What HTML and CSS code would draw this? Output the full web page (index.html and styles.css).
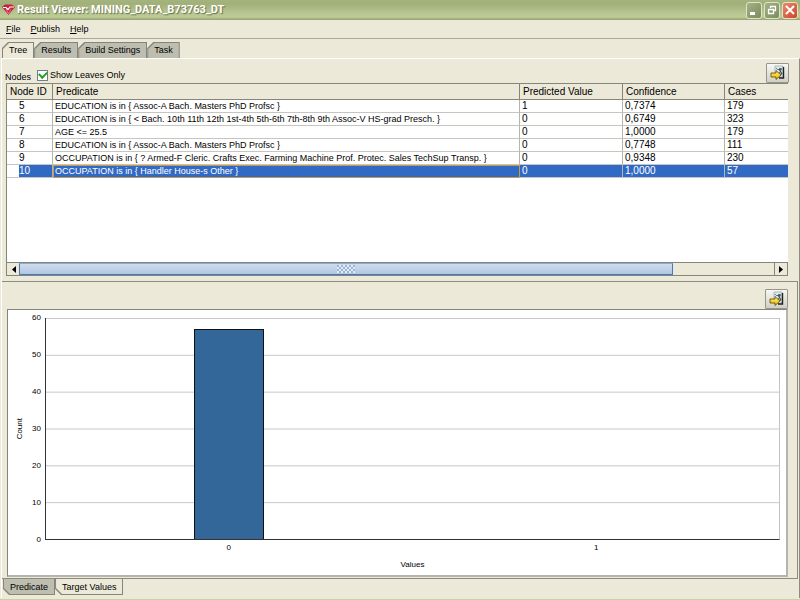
FILE: index.html
```html
<!doctype html>
<html lang="en">
  <head>
    <meta charset="utf-8">
    <meta name="viewport" content="width=device-width, initial-scale=1">
    <title>Result Viewer: MINING_DATA_B73763_DT</title>
    <link rel="stylesheet" href="styles.css">
  </head>
  <body>
    <!-- shared icon, used by both export buttons -->
    <svg class="defs" width="0" height="0" aria-hidden="true">
      <defs>
        <linearGradient id="gold" x1="0" y1="0" x2="0" y2="1">
          <stop offset="0" stop-color="#fff27a"/>
          <stop offset="1" stop-color="#f0b400"/>
        </linearGradient>
        <symbol id="export" viewBox="0 0 16 16">
          <path d="M5 1h8v11H5z" fill="#dfe9ee" stroke="#8a9298" stroke-width=".6"/>
          <path d="M13.500 2v11H9" fill="none" stroke="#222" stroke-width="1.400"/>
          <path d="M6 3l2 2 2-2 1 3-2 2 3 2" fill="none" stroke="#5d7f93"/>
          <path d="M9 4l3 5M11 3v2" stroke="#2c4b3c" stroke-width="1.200"/>
          <path d="M1 8h5V5.500L11 10l-5 4.500V12H1z" fill="url(#gold)" stroke="#6b5200" stroke-width=".9"/>
        </symbol>
      </defs>
    </svg>

    <div class="window">
      <header class="titlebar">
        <svg class="logo" width="13" height="12" viewBox="0 0 13 12" aria-hidden="true">
          <path d="M0 3l3-2.500h7L13 3 6.500 11z" fill="#c8203c"/>
          <path d="M1 3.500h3l2 2 2-2.500h4" fill="none" stroke="#fff" stroke-width="1.200"/>
          <path d="M4 5l2.500 5L9 5" fill="none" stroke="#f0899a" stroke-width=".8"/>
        </svg>
        <h1>Result Viewer: MINING_DATA_B73763_DT</h1>
        <div class="controls">
          <button type="button" class="control" aria-label="Minimize">
            <svg width="14" height="14" viewBox="0 0 14 14"><path d="M3 10.500h5" stroke="#fff" stroke-width="3"/></svg>
          </button>
          <button type="button" class="control" aria-label="Restore">
            <svg width="14" height="14" viewBox="0 0 14 14"><path d="M5.500 5V3.500h5v4H9M3.500 6.500h5v4h-5z" fill="none" stroke="#fff" stroke-width="1.300"/></svg>
          </button>
          <button type="button" class="control close" aria-label="Close">
            <svg width="14" height="14" viewBox="0 0 14 14"><path d="M3 3l8 8M11 3l-8 8" stroke="#fff" stroke-width="2"/></svg>
          </button>
        </div>
      </header>

      <nav class="menubar">
        <button type="button"><u>F</u>ile</button>
        <button type="button"><u>P</u>ublish</button>
        <button type="button"><u>H</u>elp</button>
      </nav>

      <div class="tabs">
        <button type="button" class="tab active"><span>Tree</span></button>
        <button type="button" class="tab"><span>Results</span></button>
        <button type="button" class="tab"><span>Build Settings</span></button>
        <button type="button" class="tab"><span>Task</span></button>
      </div>

      <main class="content">
        <section class="nodes">
          <div class="toolbar">
            <span class="caption">Nodes</span>
            <label class="leaves"><input type="checkbox" checked>Show Leaves Only</label>
            <button type="button" class="export" aria-label="Export nodes"><svg width="16" height="16"><use href="#export"/></svg></button>
          </div>
          <div class="table-box">
            <table>
              <colgroup>
                <col class="col-id"><col><col class="col-value"><col class="col-confidence"><col class="col-cases">
              </colgroup>
              <thead>
                <tr><th>Node ID</th><th>Predicate</th><th>Predicted Value</th><th>Confidence</th><th>Cases</th></tr>
              </thead>
              <tbody>
                <tr><td><span>5</span></td><td>EDUCATION is in { Assoc-A Bach. Masters PhD Profsc }</td><td>1</td><td>0,7374</td><td>179</td></tr>
                <tr><td><span>6</span></td><td>EDUCATION is in { &lt; Bach. 10th 11th 12th 1st-4th 5th-6th 7th-8th 9th Assoc-V HS-grad Presch. }</td><td>0</td><td>0,6749</td><td>323</td></tr>
                <tr><td><span>7</span></td><td>AGE &lt;= 25.5</td><td>0</td><td>1,0000</td><td>179</td></tr>
                <tr><td><span>8</span></td><td>EDUCATION is in { Assoc-A Bach. Masters PhD Profsc }</td><td>0</td><td>0,7748</td><td>111</td></tr>
                <tr><td><span>9</span></td><td>OCCUPATION is in { ? Armed-F Cleric. Crafts Exec. Farming Machine Prof. Protec. Sales TechSup Transp. }</td><td>0</td><td>0,9348</td><td>230</td></tr>
                <tr class="selected"><td><span>10</span></td><td>OCCUPATION is in { Handler House-s Other }</td><td>0</td><td>1,0000</td><td>57</td></tr>
              </tbody>
            </table>
            <div class="scrollbar">
              <button type="button" class="arrow" aria-label="Scroll left"><svg width="5" height="7" viewBox="0 0 5 7"><path d="M5 0v7L1 3.500z"/></svg></button>
              <div class="track"><div class="thumb"><i class="grip"></i></div></div>
              <button type="button" class="arrow" aria-label="Scroll right"><svg width="5" height="7" viewBox="0 0 5 7"><path d="M0 0v7l4-3.500z"/></svg></button>
            </div>
          </div>
        </section>

        <section class="details">
          <div class="pane">
            <div class="toolbar">
              <button type="button" class="export" aria-label="Export chart"><svg width="16" height="16"><use href="#export"/></svg></button>
            </div>
            <div class="chart">
              <div class="y-title"><span>Count</span></div>
              <ol class="y-axis">
                <li>60</li><li>50</li><li>40</li><li>30</li><li>20</li><li>10</li><li>0</li>
              </ol>
              <div class="plot">
                <div class="slot"><div class="bar" style="height: 95%"></div></div>
                <div class="slot"></div>
              </div>
              <div class="x-axis"><span>0</span><span>1</span></div>
              <div class="x-title">Values</div>
            </div>
          </div>
          <div class="tabs bottom">
            <button type="button" class="tab"><span>Predicate</span></button>
            <button type="button" class="tab active"><span>Target Values</span></button>
          </div>
        </section>
      </main>
    </div>
  </body>
</html>
```
FILE: styles.css
```css
* {
  box-sizing: border-box;
}
body {
  margin: 0;
  background: #ece9d8;
  color: #000;
  font: 9px/12px "Liberation Sans", Arial, sans-serif;
}
button {
  margin: 0;
  padding: 0;
  border: 0;
  background: none;
  color: inherit;
  font: inherit;
}
.defs {
  position: absolute;
}
.window {
  display: flex;
  flex-direction: column;
  min-height: 100vh;
  padding-bottom: 1px;
  border-bottom: 1px solid #c9d0a4;
}

/* title bar */
.titlebar {
  display: flex;
  align-items: center;
  height: 20px;
  padding: 0 2px;
  background: linear-gradient(#a5b37e, #a1b079 20%, #b5c48f 60%, #bccb98 85%, #93a16c);
}
.titlebar h1 {
  flex: 1;
  margin: 0 0 0 2px;
  color: #fff;
  font: bold 11px/18px Roboto, "Open Sans", sans-serif;
  text-shadow: 1px 1px 1px #66724a;
}
.controls {
  display: flex;
  gap: 2px;
}
.control {
  display: flex;
  width: 16px;
  height: 17px;
  align-items: center;
  justify-content: center;
  border: 1px solid #dde5c8;
  border-radius: 3px;
  background: linear-gradient(135deg, #a4b287, #7b8c5c);
}
.control.close {
  background: linear-gradient(135deg, #e98b6d, #cf4326);
}

/* menu */
.menubar {
  display: flex;
  gap: 10px;
  height: 19px;
  padding: 0 6px;
  border-bottom: 1px solid #aaa89a;
}

/* tabs */
.tabs {
  display: flex;
  padding: 3px 2px 0;
}
.tab {
  height: 16px;
  padding: 1px 1px 0;
  background: #85857c;
  clip-path: polygon(6px 0, 100% 0, 100% 100%, 0 100%, 0 6px);
}
.tab span {
  display: block;
  height: 15px;
  padding: 1px 6px;
  background: #bdbdb0;
  clip-path: polygon(6px 0, 100% 0, 100% 100%, 0 100%, 0 6px);
}
.tab.active span {
  background: #ece9d8;
}
.tabs.bottom {
  padding: 0 1px 3px;
}
.bottom .tab {
  padding: 0 1px 1px;
  clip-path: polygon(0 0, 100% 0, 100% 100%, 6px 100%, 0 10px);
}
.bottom .tab span {
  padding: 2px 6px;
  clip-path: polygon(0 0, 100% 0, 100% 100%, 6px 100%, 0 9px);
}

/* main area */
.content {
  display: flex;
  flex: 1;
  flex-direction: column;
  margin-left: 1px;
  border-top: 1px solid #fff;
  border-left: 1px solid #fff;
  border-right: 1px solid #8c8c80;
}
.toolbar {
  display: flex;
  align-items: flex-end;
  height: 24px;
}
.caption {
  width: 32px;
}
.leaves {
  display: flex;
  align-items: center;
  gap: 2px;
  height: 16px;
}
.leaves input {
  display: grid;
  width: 11px;
  height: 11px;
  margin: 0;
  place-content: center;
  appearance: none;
  border: 1px solid #6f7f8c;
  background: #fff;
}
.leaves input:checked::before {
  width: 6px;
  height: 4px;
  margin-bottom: 2px;
  border: solid #21a121;
  border-width: 0 0 2px 2px;
  content: "";
  transform: rotate(-45deg);
}
.export {
  display: flex;
  width: 23px;
  height: 20px;
  margin-left: auto;
  align-items: center;
  justify-content: center;
  border: 1px solid #96968c;
  border-radius: 1px;
  background: linear-gradient(#f8f8f4, #d0cfc6);
}

/* node table */
.nodes {
  display: flex;
  flex-direction: column;
  padding: 0 10px 5px 3px;
}
.table-box {
  display: flex;
  flex-direction: column;
  min-height: 193px;
  margin: 0 1px;
  border: 1px solid #85857c;
  border-right: 0;
  background: #fff;
}
table {
  width: 100%;
  border-collapse: separate;
  border-spacing: 0;
  table-layout: fixed;
  font-size: 10px;
  line-height: 12px;
  white-space: nowrap;
}
.col-id {
  width: 46px;
}
.col-value {
  width: 103px;
}
.col-confidence {
  width: 102px;
}
.col-cases {
  width: 63px;
}
th {
  height: 16px;
  padding: 0 3px;
  border-right: 1px solid #85857c;
  border-bottom: 1px solid #85857c;
  background: #ece9d8;
  font-weight: normal;
  text-align: left;
}
td {
  height: 13px;
  padding: 0 2px;
  border-right: 1px solid #b5b5ad;
  border-bottom: 1px solid #c6c6c0;
}
td:nth-child(2) {
  font-size: 9px;
}
th:last-child,
td:last-child {
  border-right: 0;
}
td:first-child {
  padding: 0 0 0 12px;
}
td span {
  display: block;
}
.selected td {
  background: #316ac5;
  color: #fff;
}
.selected td:first-child {
  background: #fff;
}
.selected span {
  background: #316ac5;
}
.selected td:nth-child(2) {
  outline: 1px solid #c99a4b;
  outline-offset: -1px;
}

/* scrollbar */
.scrollbar {
  display: flex;
  height: 13px;
  margin-top: auto;
  border-top: 1px solid #85857c;
  border-right: 1px solid #85857c;
}
.arrow {
  display: flex;
  width: 12px;
  align-items: center;
  justify-content: center;
  background: #ece9d8;
}
.track {
  flex: 1;
  border-right: 1px solid #85857c;
  background: #ece9d8;
}
.thumb {
  display: flex;
  width: 86.6%;
  height: 100%;
  align-items: center;
  justify-content: center;
  border: 1px solid #4a78bd;
  border-top-color: #8fa9cc;
  background: linear-gradient(#cfdcee, #b2c6e2);
}
.grip {
  width: 18px;
  height: 8px;
  background: repeating-conic-gradient(#e2ebf6 0 25%, #9ab3d6 0 50%) 0 0 / 4px 4px;
}

/* lower pane */
.details {
  display: flex;
  flex: 1;
  flex-direction: column;
  margin-right: 1px;
}
.pane {
  display: flex;
  flex: 1;
  flex-direction: column;
  padding: 0 9px 1px 5px;
  border: 1px solid #8c8c80;
  border-left: 0;
}
.pane .toolbar {
  height: 27px;
}
.chart {
  display: grid;
  flex: 1;
  grid-template-columns: 21px 15px 1fr;
  grid-template-rows: 1fr 16px 19px;
  padding: 8px 6px 0 1px;
  border: 1px solid #85857c;
  border-right: 2px solid #b5b5ad;
  border-bottom: 2px solid #b5b5ad;
  background: #fff;
  font-size: 8px;
}
.y-title {
  display: flex;
  align-items: center;
  justify-content: center;
}
.y-title span {
  writing-mode: vertical-rl;
  transform: rotate(180deg);
}
.y-axis {
  display: flex;
  flex-direction: column;
  justify-content: space-between;
  margin: -6px 4px -6px 0;
  padding: 0;
  list-style: none;
  text-align: right;
}
.plot {
  display: flex;
  border-right: 1px solid #c4c4c4;
  border-bottom: 1px solid #333;
  border-left: 1px solid #333;
  background: linear-gradient(#c8c8c8 1px, transparent 1px) 0 0 / 100% 16.667%;
}
.slot {
  display: flex;
  flex: 1;
  align-items: flex-end;
  justify-content: center;
}
.bar {
  width: 19%;
  border: 1px solid #111;
  border-bottom: 0;
  background: #336699;
}
.x-axis {
  display: flex;
  grid-column: 3;
}
.x-axis span {
  flex: 1;
  padding-top: 2px;
  text-align: center;
}
.x-title {
  grid-column: 3;
  padding-top: 3px;
  text-align: center;
}
```
